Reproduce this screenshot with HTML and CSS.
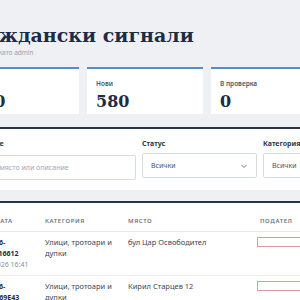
FILE: index.html
```html
<!DOCTYPE html>
<html lang="bg">
<head>
    <meta charset="UTF-8">
    <meta name="viewport" content="width=device-width, initial-scale=1.0">
    <title>Граждански сигнали</title>
    <link rel="stylesheet" href="styles.css">
</head>
<body>
<div class="page">
    <h1 class="title">Граждански сигнали</h1>
    <div class="subtitle">Влезли сте като admin</div>

    <div class="stats">
        <div class="stat">
            <div class="stat-label">Общо</div>
            <div class="stat-value">580</div>
        </div>
        <div class="stat">
            <div class="stat-label">Нови</div>
            <div class="stat-value">580</div>
        </div>
        <div class="stat">
            <div class="stat-label">В проверка</div>
            <div class="stat-value">0</div>
        </div>
        <div class="stat">
            <div class="stat-label">Решени</div>
            <div class="stat-value">0</div>
        </div>
    </div>

    <div class="panel filters">
        <div class="field">
            <label for="q">Търсене</label>
            <input id="q" type="text" placeholder="Код, място или описание">
        </div>
        <div class="field">
            <label for="status">Статус</label>
            <div class="select">
                <span>Всички</span>
                <svg width="8" height="8" viewBox="0 0 8 8"><path d="M1.5 3 L4 5.5 L6.5 3" fill="none" stroke="#6b7280" stroke-width="0.9"/></svg>
            </div>
        </div>
        <div class="field">
            <label for="cat">Категория</label>
            <div class="select">
                <span>Всички</span>
                <svg width="8" height="8" viewBox="0 0 8 8"><path d="M1.5 3 L4 5.5 L6.5 3" fill="none" stroke="#6b7280" stroke-width="0.9"/></svg>
            </div>
        </div>
    </div>

    <div class="panel">
        <table class="signals">
            <thead>
                <tr>
                    <th class="col-code">Код / Дата</th>
                    <th class="col-cat">Категория</th>
                    <th class="col-place">Място</th>
                    <th>Подател</th>
                </tr>
            </thead>
            <tbody>
                <tr>
                    <td>
                        <div class="code">SIG-2026-7F3A9A16612</div>
                        <div class="date">12.01.2026 16:41</div>
                    </td>
                    <td>Улици, тротоари и дупки</td>
                    <td>бул Цар Освободител</td>
                    <td><span class="sender"></span></td>
                </tr>
                <tr>
                    <td>
                        <div class="code">SIG-2026-5B0D2C69E43</div>
                        <div class="date">12.01.2026 16:38</div>
                    </td>
                    <td>Улици, тротоари и дупки</td>
                    <td>Кирил Старцев 12</td>
                    <td><span class="sender"></span></td>
                </tr>
            </tbody>
        </table>
    </div>
</div>
</body>
</html>
```

FILE: styles.css
```css
body {
    margin: 0;
    background-color: #eef0f3;
    font-family: "Noto Sans", "Open Sans", sans-serif;
    color: #2d3748;
    overflow: hidden;
}

.page {
    width: 480px;
    margin-left: -37px;
    padding-top: 23px;
}

.title {
    margin: 0 0 0 -3px;
    font-family: "DejaVu Serif", serif;
    font-size: 19px;
    line-height: 24px;
    font-weight: bold;
    color: #1d2b45;
}

.subtitle {
    margin-top: 1px;
    font-size: 6.5px;
    line-height: 10px;
    color: #9aa2ad;
}

.stats {
    display: grid;
    grid-template-columns: repeat(4, 116px);
    gap: 8px;
    margin-top: 9px;
}

.stat {
    background-color: #fff;
    border-top: 2px solid #5a8ccb;
    padding: 10px 9px 2px;
}

.stat-label {
    font-size: 6.5px;
    line-height: 10px;
    font-weight: 600;
    color: #4a5568;
}

.stat-value {
    margin-top: 3px;
    font-family: "DejaVu Serif", serif;
    font-size: 16px;
    line-height: 20px;
    font-weight: bold;
    color: #1d2b45;
}

.panel {
    background-color: #fff;
    border-top: 2px solid #24344f;
    margin-top: 11px;
}

.filters {
    display: grid;
    grid-template-columns: 162px 115px 115px 1fr;
    gap: 6px;
    padding: 10px 10px 10px 11px;
    margin-top: 13px;
}

.field label {
    display: block;
    font-size: 7px;
    line-height: 10px;
    font-weight: bold;
    color: #2d3748;
    margin-bottom: 4px;
}

.field input,
.select {
    box-sizing: border-box;
    width: 100%;
    height: 25px;
    border: 1px solid #d7dce3;
    border-radius: 2px;
    padding: 0 8px;
    font-family: inherit;
    font-size: 7px;
    color: #4a5568;
    background: #fff;
}

.field input::placeholder {
    color: #a0a8b3;
}

.select {
    display: flex;
    align-items: center;
    justify-content: space-between;
}

.signals {
    border-collapse: collapse;
    width: 100%;
}

.signals th {
    text-align: left;
    font-size: 6px;
    line-height: 10px;
    font-weight: 600;
    letter-spacing: 0.6px;
    text-transform: uppercase;
    color: #6b7280;
    padding: 13px 4px 5px;
    border-bottom: 1px solid #e5e8ec;
}

.signals td {
    vertical-align: top;
    font-size: 7.5px;
    line-height: 11px;
    color: #3a4556;
    padding: 5px 4px 5px;
    border-bottom: 1px solid #eceef1;
}

.signals th:first-child,
.signals td:first-child {
    padding-left: 10px;
}

.signals th:last-child {
    padding-left: 7px;
}

.col-code { width: 64px; }
.col-cat { width: 75px; }
.col-place { width: 121px; }

.code {
    font-weight: bold;
    color: #1d2b45;
    font-size: 7px;
    width: 40px;
}

.date {
    color: #8a93a0;
    font-size: 7px;
    white-space: nowrap;
}

.sender {
    display: block;
    box-sizing: border-box;
    width: 60px;
    height: 10px;
    border: 1px solid #e39a9a;
    background-color: #fff;
}
```
